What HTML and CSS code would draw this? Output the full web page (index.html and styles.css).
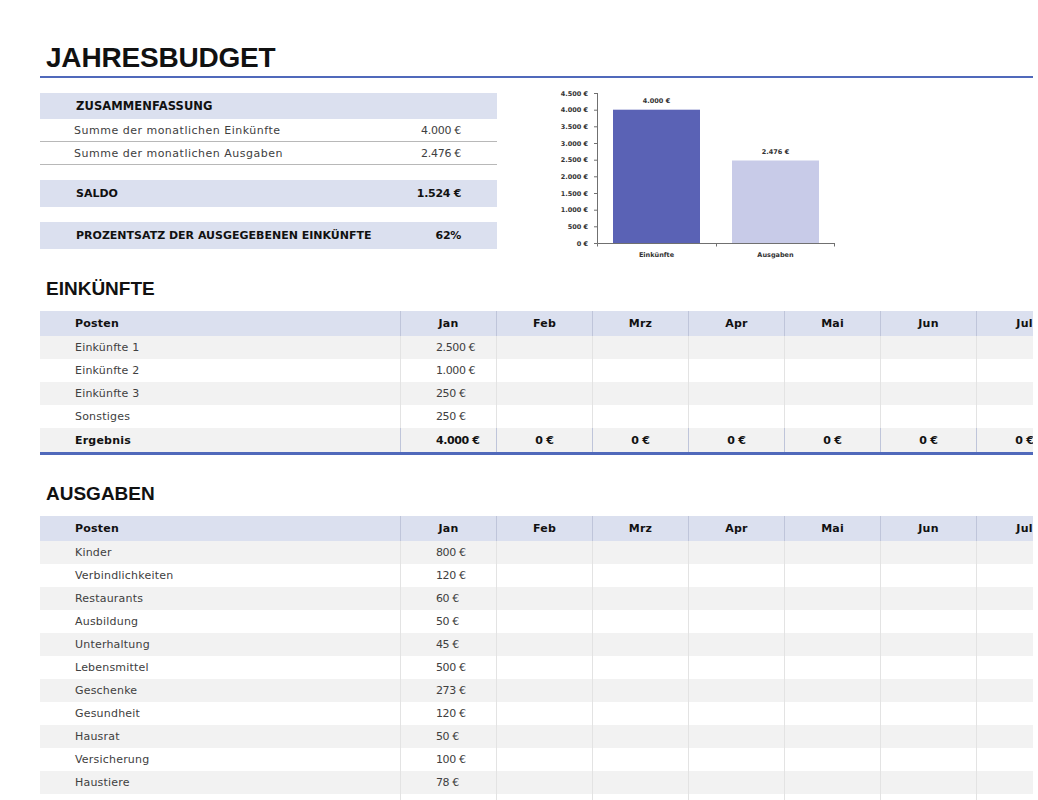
FILE: index.html
```html
<!DOCTYPE html>
<html lang="de">
<head>
<meta charset="utf-8">
<title>Jahresbudget</title>
<link rel="stylesheet" href="styles.css">
</head>
<body>
<div class="page">
  <h1 class="title">JAHRESBUDGET</h1>

  <div class="top">
    <div class="summary">
      <div class="sum-head">ZUSAMMENFASSUNG</div>
      <div class="sum-row"><span>Summe der monatlichen Einkünfte</span><span class="num">4.000 €</span></div>
      <div class="sum-row"><span>Summe der monatlichen Ausgaben</span><span class="num">2.476 €</span></div>
      <div class="sum-band"><span>SALDO</span><span class="num">1.524 €</span></div>
      <div class="sum-band"><span>PROZENTSATZ DER AUSGEGEBENEN EINKÜNFTE</span><span class="num">62%</span></div>
    </div>

    <svg class="chart" width="300" height="180" viewBox="0 0 300 180">
      <g class="axis-text" text-anchor="end">
        <text x="48" y="10.5">4.500 €</text>
        <text x="48" y="27.2">4.000 €</text>
        <text x="48" y="43.8">3.500 €</text>
        <text x="48" y="60.5">3.000 €</text>
        <text x="48" y="77.2">2.500 €</text>
        <text x="48" y="93.8">2.000 €</text>
        <text x="48" y="110.5">1.500 €</text>
        <text x="48" y="127.2">1.000 €</text>
        <text x="48" y="143.8">500 €</text>
        <text x="48" y="160.5">0 €</text>
      </g>
      <rect x="73" y="24.7" width="87" height="133.3" fill="#5a62b5"/>
      <rect x="192" y="75.5" width="87" height="82.5" fill="#c8cbe8"/>
      <g stroke="#707070" stroke-width="1" fill="none">
        <path d="M57.5 8 V158.5 H295"/>
        <path d="M54 8.5 H57.5 M54 25.2 H57.5 M54 41.8 H57.5 M54 58.5 H57.5 M54 75.2 H57.5 M54 91.8 H57.5 M54 108.5 H57.5 M54 125.2 H57.5 M54 141.8 H57.5 M54 158.5 H57.5"/>
        <path d="M176.5 158.5 V161.5 M294.5 158.5 V161.5 M57.5 158.5 V161.5"/>
      </g>
      <g class="axis-text" text-anchor="middle">
        <text x="116.5" y="17.5">4.000 €</text>
        <text x="235.5" y="68.5">2.476 €</text>
        <text x="116.5" y="171.5">Einkünfte</text>
        <text x="235.5" y="171.5">Ausgaben</text>
      </g>
    </svg>
  </div>

  <section class="sec">
    <h2 class="sec-title">EINKÜNFTE</h2>
    <div class="tbl-wrap income">
      <table class="grid">
        <colgroup><col class="c-item"><col class="c-m"><col class="c-m"><col class="c-m"><col class="c-m"><col class="c-m"><col class="c-m"><col class="c-m"></colgroup>
        <thead>
          <tr><th>Posten</th><th>Jan</th><th>Feb</th><th>Mrz</th><th>Apr</th><th>Mai</th><th>Jun</th><th>Jul</th></tr>
        </thead>
        <tbody>
          <tr><td>Einkünfte 1</td><td class="val">2.500 €</td><td></td><td></td><td></td><td></td><td></td><td></td></tr>
          <tr><td>Einkünfte 2</td><td class="val">1.000 €</td><td></td><td></td><td></td><td></td><td></td><td></td></tr>
          <tr><td>Einkünfte 3</td><td class="val">250 €</td><td></td><td></td><td></td><td></td><td></td><td></td></tr>
          <tr><td>Sonstiges</td><td class="val">250 €</td><td></td><td></td><td></td><td></td><td></td><td></td></tr>
          <tr class="total"><td>Ergebnis</td><td class="val">4.000 €</td><td class="z">0 €</td><td class="z">0 €</td><td class="z">0 €</td><td class="z">0 €</td><td class="z">0 €</td><td class="z">0 €</td></tr>
        </tbody>
      </table>
    </div>
  </section>

  <section class="sec expenses">
    <h2 class="sec-title">AUSGABEN</h2>
    <div class="tbl-wrap">
      <table class="grid">
        <colgroup><col class="c-item"><col class="c-m"><col class="c-m"><col class="c-m"><col class="c-m"><col class="c-m"><col class="c-m"><col class="c-m"></colgroup>
        <thead>
          <tr><th>Posten</th><th>Jan</th><th>Feb</th><th>Mrz</th><th>Apr</th><th>Mai</th><th>Jun</th><th>Jul</th></tr>
        </thead>
        <tbody>
          <tr><td>Kinder</td><td class="val">800 €</td><td></td><td></td><td></td><td></td><td></td><td></td></tr>
          <tr><td>Verbindlichkeiten</td><td class="val">120 €</td><td></td><td></td><td></td><td></td><td></td><td></td></tr>
          <tr><td>Restaurants</td><td class="val">60 €</td><td></td><td></td><td></td><td></td><td></td><td></td></tr>
          <tr><td>Ausbildung</td><td class="val">50 €</td><td></td><td></td><td></td><td></td><td></td><td></td></tr>
          <tr><td>Unterhaltung</td><td class="val">45 €</td><td></td><td></td><td></td><td></td><td></td><td></td></tr>
          <tr><td>Lebensmittel</td><td class="val">500 €</td><td></td><td></td><td></td><td></td><td></td><td></td></tr>
          <tr><td>Geschenke</td><td class="val">273 €</td><td></td><td></td><td></td><td></td><td></td><td></td></tr>
          <tr><td>Gesundheit</td><td class="val">120 €</td><td></td><td></td><td></td><td></td><td></td><td></td></tr>
          <tr><td>Hausrat</td><td class="val">50 €</td><td></td><td></td><td></td><td></td><td></td><td></td></tr>
          <tr><td>Versicherung</td><td class="val">100 €</td><td></td><td></td><td></td><td></td><td></td><td></td></tr>
          <tr><td>Haustiere</td><td class="val">78 €</td><td></td><td></td><td></td><td></td><td></td><td></td></tr>
          <tr><td>Technik</td><td class="val">55 €</td><td></td><td></td><td></td><td></td><td></td><td></td></tr>
        </tbody>
      </table>
    </div>
  </section>
</div>
</body>
</html>
```

FILE: styles.css
```css
html, body {
  margin: 0;
  padding: 0;
}

body {
  width: 1038px;
  height: 800px;
  overflow: hidden;
  background: #ffffff;
  font-family: "DejaVu Sans", "Liberation Sans", sans-serif;
  font-size: 11px;
  color: #404040;
}

.page {
  padding: 40px 0 0 40px;
  width: 993px;
}

.title {
  margin: 0;
  padding-left: 6px;
  font: bold 28px/36px "Liberation Sans", Arial, sans-serif;
  letter-spacing: -0.2px;
  color: #111111;
  border-bottom: 2px solid #5069bb;
}

.top {
  display: flex;
  align-items: flex-start;
  gap: 43px;
  margin-top: 7px;
}

.summary {
  width: 457px;
  margin-top: 8px;
}

.sum-head {
  height: 26px;
  display: flex;
  align-items: center;
  padding: 0 36px;
  background: #dbe0ef;
  font-weight: bold;
  font-size: 11.5px;
  letter-spacing: 0.1px;
  color: #111111;
}

.sum-row {
  height: 22px;
  display: flex;
  align-items: center;
  justify-content: space-between;
  padding: 0 36px 0 34px;
  border-bottom: 1px solid #b8b8b8;
  letter-spacing: 0.5px;
}

.sum-row .num {
  letter-spacing: -0.3px;
}

.sum-band {
  height: 27px;
  margin-top: 15px;
  display: flex;
  align-items: center;
  justify-content: space-between;
  padding: 0 36px;
  background: #dbe0ef;
  font-weight: bold;
  font-size: 11px;
  color: #111111;
}

.sum-band .num {
  letter-spacing: -0.3px;
}

.chart {
  display: block;
  flex: none;
}

.axis-text {
  font-family: "DejaVu Sans", sans-serif;
  font-size: 6.5px;
  font-weight: bold;
  fill: #333333;
}

.sec-title {
  margin: 12px 0 10px;
  padding-left: 6px;
  font: bold 19px/24px "Liberation Sans", Arial, sans-serif;
  color: #111111;
}

.expenses .sec-title {
  margin-top: 27px;
}

.tbl-wrap {
  width: 993px;
  overflow: hidden;
}

.tbl-wrap.income {
  border-bottom: 3px solid #5069bb;
}

.grid {
  table-layout: fixed;
  width: 1032px;
  border-collapse: separate;
  border-spacing: 0;
}

.c-item {
  width: 360px;
}

.c-m {
  width: 96px;
}

.grid th {
  height: 25px;
  padding: 0;
  background: #dbe0ef;
  border-left: 1px solid #bfc5da;
  font-size: 11px;
  font-weight: bold;
  letter-spacing: 0.2px;
  color: #111111;
  text-align: center;
}

.grid th:first-child {
  text-align: left;
  padding-left: 35px;
  border-left: none;
}

.grid td {
  height: 23px;
  padding: 0;
  border-left: 1px solid #e3e3e3;
  letter-spacing: 0.2px;
  white-space: nowrap;
}

.grid td:first-child {
  padding-left: 35px;
  border-left: none;
}

.grid tbody tr:nth-child(odd) td {
  background: #f2f2f2;
}

.grid td.val {
  padding-left: 35px;
  letter-spacing: -0.4px;
}

.grid tr.total td {
  height: 24px;
  background: #dbe0ef;
  border-left-color: #bfc5da;
  font-weight: bold;
  color: #111111;
}

.grid tr.total td:first-child {
  border-left: none;
}

.grid td.z {
  text-align: center;
  letter-spacing: -0.2px;
}
```
